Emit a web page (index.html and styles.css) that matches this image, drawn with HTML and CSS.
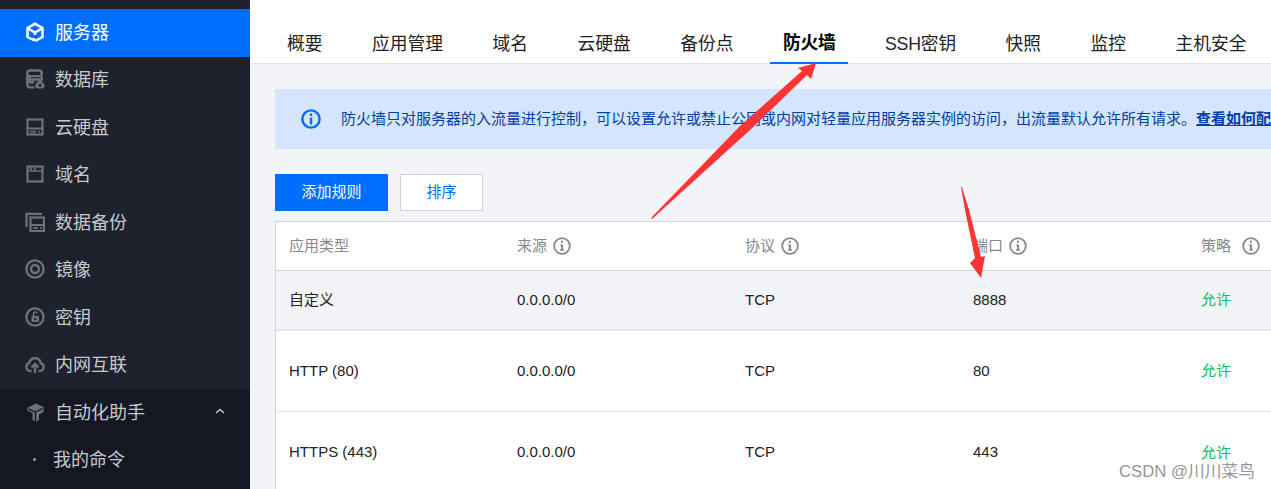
FILE: index.html
```html
<!DOCTYPE html>
<html lang="en">
<head>
    <meta charset="UTF-8">
    <meta name="viewport" content="width=device-width, initial-scale=1.0">
    <title>防火墙</title>
    <link rel="stylesheet" href="styles.css">
</head>
<body>
    <div class="page">
        <aside class="sidebar">
            <div class="nav-item active">
                <svg class="nav-icon" viewBox="0 0 20 20"><path d="M7 17.500l-4.500-2.500V6L10 1.800 17.500 6v9L10 19" fill="none" stroke="#fff" stroke-width="2.500"/><path d="M3 6.500l7 4 7-4" fill="none" stroke="#fff" stroke-width="2.500"/><path d="M10 10v3" stroke="#fff" stroke-width="2.500"/><circle cx="8.500" cy="17.500" r="1.800" fill="#fff"/></svg>
                <span>服务器</span>
            </div>
            <div class="nav-item">
                <svg class="nav-icon" viewBox="0 0 20 20"><g fill="none" stroke="#6b727c" stroke-width="2.400"><rect x="2.200" y="1.500" width="14.600" height="5.600" rx="2.800"/><path d="M16.800 7.500v3H5a2.800 2.800 0 0 0-2.800-2.800M2.200 7v3.200c0 1.500 1 3 3 3h4M2.200 12v3c0 2 1 3.400 3 3.400h4"/></g><path d="M15 9.500l4.800 7c0 1.800-1 3-2.800 3h-4.500c-1.800 0-2.500-1.200-2.500-3z" fill="#6b727c"/><circle cx="15" cy="16.200" r="1.500" fill="#1e222d"/></svg>
                <span>数据库</span>
            </div>
            <div class="nav-item">
                <svg class="nav-icon" viewBox="0 0 20 20"><rect x="2.500" y="2.500" width="15" height="15" fill="none" stroke="#6b727c" stroke-width="2.200"/><path d="M2 11.500h16" stroke="#6b727c" stroke-width="2"/><path d="M5 13.800h6v1.800H5zM13.200 13.800H15v1.800h-1.800z" fill="#6b727c"/></svg>
                <span>云硬盘</span>
            </div>
            <div class="nav-item">
                <svg class="nav-icon" viewBox="0 0 20 20"><rect x="2.500" y="2.500" width="15" height="15" fill="none" stroke="#6b727c" stroke-width="2.200"/><path d="M3 7h14" stroke="#6b727c" stroke-width="1.500"/><path d="M4.800 3.500h2v2.500h-2zM8.800 3.500h2v2.500h-2z" fill="#6b727c"/></svg>
                <span>域名</span>
            </div>
            <div class="nav-item">
                <svg class="nav-icon" viewBox="0 0 20 20"><path d="M1.500 15V1.800H17" fill="none" stroke="#6b727c" stroke-width="2.200"/><rect x="5.500" y="5.500" width="13.500" height="13.500" fill="none" stroke="#6b727c" stroke-width="2.200"/><path d="M5 13h14" stroke="#6b727c" stroke-width="2"/><path d="M8 15h5v1.800H8zM15 15h2v1.800h-2z" fill="#6b727c"/></svg>
                <span>数据备份</span>
            </div>
            <div class="nav-item">
                <svg class="nav-icon" viewBox="0 0 20 20"><circle cx="10" cy="10" r="8.600" fill="none" stroke="#6b727c" stroke-width="2.400"/><circle cx="10" cy="10" r="4" fill="none" stroke="#6b727c" stroke-width="2.400"/></svg>
                <span>镜像</span>
            </div>
            <div class="nav-item">
                <svg class="nav-icon" viewBox="0 0 20 20"><circle cx="10" cy="10" r="8.600" fill="none" stroke="#6b727c" stroke-width="2.400"/><path d="M8.500 9V6.800a2 2 0 0 1 3.800-.6" fill="none" stroke="#6b727c" stroke-width="1.600"/><rect x="6.500" y="9" width="7.500" height="6" fill="#6b727c"/><path d="M9.300 11h2v2h-2z" fill="#1e222d"/></svg>
                <span>密钥</span>
            </div>
            <div class="nav-item">
                <svg class="nav-icon" viewBox="0 0 20 20"><path d="M6.500 17H5.200a3.900 3.900 0 0 1-3.800-4.200C1.500 10.800 2.500 9.500 4.200 9a5.900 5.900 0 0 1 11.600 0c1.700.5 2.800 1.800 2.800 3.800a3.900 3.900 0 0 1-3.800 4.200h-1.300" fill="none" stroke="#6b727c" stroke-width="2.400"/><path d="M6.500 13.500L10 10l3.500 3.500M10 10.500V19" fill="none" stroke="#6b727c" stroke-width="2.400"/></svg>
                <span>内网互联</span>
            </div>
            <div class="nav-group">
                <div class="nav-item">
                    <svg class="nav-icon" viewBox="0 0 20 20"><path d="M2 6l9-4.500 7.500 3.500v5l-4.500 2.500V18l-3 1.500L7.500 18v-7L2 8.500z" fill="#6b727c"/><path d="M3 6.800l7.500 3.200 7-3.500M10.500 10v9" fill="none" stroke="#151823" stroke-width="1.300"/></svg>
                    <span>自动化助手</span>
                    <svg class="nav-caret" viewBox="0 0 10 6"><path d="M1 5l4-3.500L9 5" fill="none" stroke="#c5c9cf" stroke-width="1.500"/></svg>
                </div>
                <div class="nav-item nav-child">
                    <i class="nav-dot"></i>
                    <span>我的命令</span>
                </div>
            </div>
        </aside>

        <main class="main">
            <nav class="tabs">
                <a class="tab">概要</a>
                <a class="tab">应用管理</a>
                <a class="tab">域名</a>
                <a class="tab">云硬盘</a>
                <a class="tab">备份点</a>
                <a class="tab tab-active">防火墙</a>
                <a class="tab tab-latin">SSH密钥</a>
                <a class="tab">快照</a>
                <a class="tab">监控</a>
                <a class="tab">主机安全</a>
            </nav>

            <div class="content">
                <div class="notice">
                    <svg class="notice-icon" viewBox="0 0 20 20"><circle cx="10" cy="10" r="8.600" fill="none" stroke="#006eff" stroke-width="2.400"/><path d="M8.800 4.500h2.400v2.400H8.800zM8.800 8.500h2.400v7H8.800z" fill="#006eff"/></svg>
                    <p>防火墙只对服务器的入流量进行控制，可以设置允许或禁止公网或内网对轻量应用服务器实例的访问，出流量默认允许所有请求。<a class="notice-link">查看如何配</a></p>
                </div>

                <div class="toolbar">
                    <button class="btn btn-primary"><span>添加规则</span></button>
                    <button class="btn btn-plain"><span>排序</span></button>
                </div>

                <table class="rules">
                    <thead>
                        <tr>
                            <th>应用类型</th>
                            <th>来源<svg class="help" viewBox="0 0 18 18"><use href="#help"/></svg></th>
                            <th>协议<svg class="help" viewBox="0 0 18 18"><use href="#help"/></svg></th>
                            <th>端口<svg class="help" viewBox="0 0 18 18"><use href="#help"/></svg></th>
                            <th>策略<svg class="help help-wide" viewBox="0 0 18 18"><use href="#help"/></svg></th>
                        </tr>
                    </thead>
                    <tbody>
                        <tr class="row-hover">
                            <td class="cjk">自定义</td>
                            <td>0.0.0.0/0</td>
                            <td>TCP</td>
                            <td>8888</td>
                            <td class="cjk allow">允许</td>
                        </tr>
                        <tr class="row-tall">
                            <td>HTTP (80)</td>
                            <td>0.0.0.0/0</td>
                            <td>TCP</td>
                            <td>80</td>
                            <td class="cjk allow">允许</td>
                        </tr>
                        <tr class="row-last">
                            <td>HTTPS (443)</td>
                            <td>0.0.0.0/0</td>
                            <td>TCP</td>
                            <td>443</td>
                            <td class="cjk allow">允许</td>
                        </tr>
                    </tbody>
                </table>
            </div>
        </main>
    </div>

    <svg class="defs" width="0" height="0">
        <symbol id="help" viewBox="0 0 18 18">
            <circle cx="9" cy="9" r="7.800" fill="none" stroke="#888" stroke-width="1.800"/>
            <path d="M8 3.800h2v2H8zM7 7.500h3v5h1v1.200H7v-1.200h1V8.700H7z" fill="#888"/>
        </symbol>
    </svg>

    <!-- red arrows drawn over the screenshot -->
    <svg class="arrows" viewBox="0 0 1271 489">
        <path d="M651 218L740 126 802 71 798 68 816 63 811 79 807 75 750 130 652 219z" fill="#f33"/>
        <path d="M961 187L965 210 975 258 970 263 981 278 985 256 981 257 969 210 962 187z" fill="#f33"/>
    </svg>

    <div class="watermark">CSDN @川川菜鸟</div>
</body>
</html>
```

FILE: styles.css
```css
html, body {
    margin: 0;
    padding: 0;
    height: 100%;
    overflow: hidden;
}

body {
    background: #f2f4f8;
    color: #000;
    font-family: "Liberation Sans", "Noto Sans CJK SC", sans-serif;
    font-size: 15px;
}

.page {
    display: flex;
    height: 489px;
}

.sidebar {
    display: flex;
    flex-direction: column;
    width: 250px;
    flex-shrink: 0;
    padding-top: 9px;
    box-sizing: border-box;
    background: #1e222d;
    color: #c5c9cf;
    font-size: 18px;
}

.nav-item {
    display: flex;
    align-items: center;
    height: 47.5px;
    flex-shrink: 0;
    padding-left: 25px;
    gap: 10px;
}

.nav-item span {
    margin-bottom: 4px;
}

.nav-item.active {
    background: #006eff;
    color: #fff;
}

.nav-icon {
    width: 20px;
    height: 20px;
    flex-shrink: 0;
    margin-bottom: 2px;
}

.nav-group {
    flex: 1;
    background: #151823;
}

.nav-caret {
    width: 10px;
    height: 6px;
    margin-left: auto;
    margin-right: 25px;
    margin-bottom: 4px;
}

.nav-child {
    gap: 0;
    padding-left: 33px;
}

.nav-dot {
    width: 3px;
    height: 3px;
    border-radius: 50%;
    background: #9ba0a8;
    margin-right: 17px;
    margin-bottom: 2px;
}

.main {
    flex: 1;
    min-width: 0;
    overflow: hidden;
}

.tabs {
    display: flex;
    align-items: flex-end;
    height: 63px;
    padding-left: 24px;
    gap: 23.5px;
    background: #fff;
    border-bottom: 1px solid #e4e6eb;
    white-space: nowrap;
    font-size: 17.75px;
    color: #222;
}

.tab {
    height: 40px;
    line-height: 43px;
    padding: 0 13px;
    flex-shrink: 0;
}

.tab-active {
    color: #000;
    font-weight: bold;
    letter-spacing: -0.3px;
    border-bottom: 2px solid #006eff;
    margin-bottom: -1px;
}

.tab-latin {
    letter-spacing: -0.2px;
}

.content {
    padding: 25px 0 0 25px;
}

.notice {
    display: flex;
    align-items: center;
    height: 60px;
    padding-left: 26px;
    background: #d4e5fd;
    color: #003ea8;
    font-size: 15px;
    white-space: nowrap;
    overflow: hidden;
}

.notice p {
    margin: 0 0 4px 20px;
}

.notice-icon {
    width: 20px;
    height: 20px;
    flex-shrink: 0;
}

.notice-link {
    font-weight: bold;
    text-decoration: underline;
}

.toolbar {
    display: flex;
    gap: 12px;
    margin-top: 25px;
}

.btn {
    height: 37px;
    border: 1px solid #006eff;
    font-family: inherit;
    font-size: 15px;
    padding: 0 0 4px;
}

.btn-primary {
    width: 113px;
    background: #006eff;
    color: #fff;
}

.btn-plain {
    width: 83px;
    background: #fff;
    border-color: #cfd5de;
    color: #006eff;
}

.rules {
    margin-top: 10px;
    border-collapse: separate;
    border-spacing: 0;
    table-layout: fixed;
    width: 1141px;
    background: #fff;
    border-top: 1px solid #cfd5de;
    border-left: 1px solid #cfd5de;
}

.rules th,
.rules td {
    width: 228px;
    padding: 0 0 0 13px;
    box-sizing: border-box;
    text-align: left;
    font-weight: normal;
}

.rules th {
    height: 49px;
    padding-bottom: 4px;
    color: #888;
    border-bottom: 1px solid #cfd5de;
}

.rules td {
    height: 80px;
    border-bottom: 1px solid #e5e8ee;
    color: #222;
}

.rules .row-hover td {
    height: 60px;
    padding-bottom: 1px;
    background: #f2f4f8;
    border-bottom-width: 2px;
}

.rules .row-tall td {
    height: 81px;
    padding-bottom: 1px;
}

.rules .row-hover .cjk,
.rules .row-tall .cjk {
    padding-bottom: 4px;
}

.rules .row-last .cjk {
    padding-bottom: 1px;
}

.rules .allow {
    color: #0abf5b;
}

.help {
    width: 18px;
    height: 18px;
    margin-left: 6px;
    vertical-align: -4px;
}

.help-wide {
    margin-left: 11px;
}

.defs {
    position: absolute;
}

.arrows {
    position: absolute;
    top: 0;
    left: 0;
    width: 1271px;
    height: 489px;
    pointer-events: none;
}

.watermark {
    position: absolute;
    right: 16px;
    bottom: 6px;
    color: rgba(120, 120, 120, 0.8);
    font-size: 16.75px;
    line-height: 22px;
}
```
